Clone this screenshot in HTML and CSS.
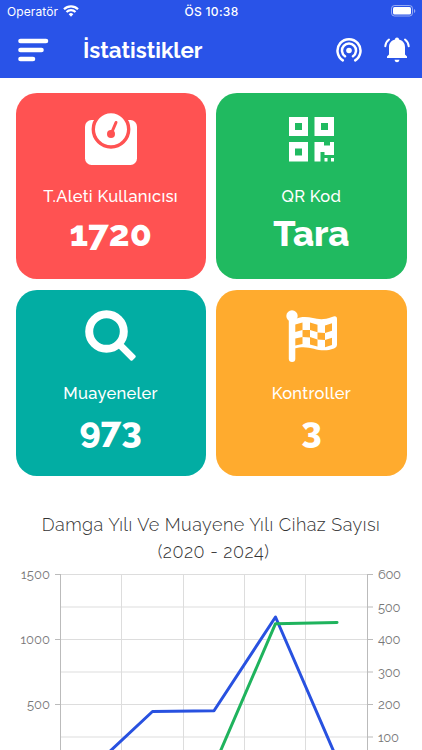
FILE: index.html
```html
<!DOCTYPE html>
<html lang="tr">
<head>
    <meta charset="UTF-8">
    <meta name="viewport" content="width=device-width, initial-scale=1">
    <title>İstatistikler</title>
    <link rel="stylesheet" href="styles.css">
</head>
<body>
<header class="header">
    <div class="status">
        <div class="carrier">
            <span>Operatör</span>
            <svg width="16" height="12" viewBox="0 0 16 12" fill="none" stroke="#fff" stroke-width="2.200">
                <path d="M1 4.300a10 10 0 0 1 14 0M3.500 7a6.400 6.400 0 0 1 9 0"/>
                <path d="M8 11.700L5.700 9.200a3.300 3.300 0 0 1 4.600 0z" fill="#fff" stroke="none"/>
            </svg>
        </div>
        <div class="clock">ÖS 10:38</div>
        <svg class="battery" width="25" height="12" viewBox="0 0 25 12">
            <rect x=".5" y=".5" width="21" height="10.500" rx="3" fill="none" stroke="#fff" stroke-opacity=".5"/>
            <rect x="2" y="2" width="18" height="7.500" rx="1.500" fill="#fff"/>
            <path d="M23 4v4q1.300-.6 1.300-2T23 4z" fill="#fff" fill-opacity=".5"/>
        </svg>
    </div>
    <div class="toolbar">
        <svg class="menu" width="32" height="24" viewBox="0 0 32 24" stroke="#fff" stroke-width="4.600" stroke-linecap="round">
            <path d="M3.500 3h25.500M3.500 12h21M3.500 21h12.500"/>
        </svg>
        <h1>İstatistikler</h1>
        <svg class="signal" width="26" height="26" viewBox="0 0 26 26" fill="none" stroke="#fff" stroke-width="2.500" stroke-linecap="round">
            <path d="M6.800 23.400a11.500 11.500 0 1 1 12.400 0M9 19.300a7 7 0 1 1 8 0"/>
            <circle cx="13" cy="13.500" r="2.800" fill="#fff" stroke="none"/>
        </svg>
        <svg class="bell" width="26" height="26" viewBox="0 0 26 26" fill="#fff">
            <path d="M13 .5c1.200 0 2 .8 2 2 3.700 1 6 3.700 6 7.500v7.500l2 2V21H3v-1.500l2-2V10c0-3.800 2.300-6.500 6-7.500 0-1.200.8-2 2-2zM10.500 22.800h5c-.4 1.700-1.200 2.500-2.500 2.500s-2.100-.8-2.500-2.500z"/>
            <path d="M5 2.500C2.800 4.200 1.500 6.500 1.300 9.200M21 2.500c2.200 1.700 3.500 4 3.700 6.700" fill="none" stroke="#fff" stroke-width="2" stroke-linecap="round"/>
        </svg>
    </div>
</header>

<main>
    <div class="cards">
        <div class="card red">
            <svg class="icon" viewBox="0 0 52 52">
                <rect y="7" width="52" height="45" rx="6.500" fill="#fff"/>
                <circle cx="26" cy="16.300" r="17.700" fill="#fff" stroke="#ff5252" stroke-width="3.400"/>
                <circle cx="26" cy="21" r="4" fill="#ff5252"/>
                <path d="M26.500 20l4.500-10.500" stroke="#ff5252" stroke-width="3" stroke-linecap="round"/>
            </svg>
            <p class="label">T.Aleti Kullanıcısı</p>
            <p class="value">1720</p>
        </div>
        <div class="card green">
            <svg class="icon" viewBox="-.5 0 52 52" fill="#fff" fill-rule="evenodd">
                <path d="M3.500 4h19v19h-19zm6 6v7h7v-7zM29 4h19.500v19H29zm6.500 6v7h7v-7zM3.500 29h19v19.500h-19zm6 6.500v7h7v-7z"/>
                <path d="M29 29h9.500v3.500h6V29h4v13H39v-3h-4v9.500h-6zM39 45h3v3.500h-3zM45.500 45h3v3.500h-3z"/>
            </svg>
            <p class="label">QR Kod</p>
            <p class="value">Tara</p>
        </div>
        <div class="card teal">
            <svg class="icon" viewBox="0 0 52 52" fill="none" stroke="#fff">
                <circle cx="21.500" cy="21.500" r="17.300" stroke-width="8"/>
                <path d="M34 34l3 3" stroke-width="4"/>
                <path d="M38 35l11.500 11.500-3 3L35 38z" fill="#fff" stroke-width="2.500" stroke-linejoin="round"/>
            </svg>
            <p class="label">Muayeneler</p>
            <p class="value">973</p>
        </div>
        <div class="card orange">
            <svg class="icon" viewBox="-.5 0 52 52" fill="#fff">
                <circle cx="6.500" cy="6" r="5.700"/>
                <path d="M3.300 6h6.500v43q0 3-3.200 3t-3.300-3z"/>
                <path d="M9 9.500c15-7 21 4 37.500-2.500q5-2 5 2v26q0 2-3 3.500c-16 6-23-5-39.500 0z"/>
                <g fill="#ffab2e">
                    <path d="M9.800 14.500l7.200-2v7.500l-7.200 2zM24.500 12.500l7.500 2.200v7.500l-7.500-2.200zM39.500 15.500l7-2.200v7.400l-7 2.300z"/>
                    <path d="M17 20l7.500 0v7.500l-7.500-.5zM32 22.500l7.500.5v7l-7.500-.5z"/>
                    <path d="M9.800 28.500l7.200-1.500v7l-7.200 1.500zM24.500 27l7.500 2.500v7l-7.500-2zM39.500 30l7-2.200v7.200l-7 2.300z"/>
                </g>
            </svg>
            <p class="label">Kontroller</p>
            <p class="value">3</p>
        </div>
    </div>

    <section class="chart">
        <h2>Damga Yılı Ve Muayene Yılı Cihaz Sayısı<br><span class="years">(2020 - 2024)</span></h2>
        <svg width="422" height="186" viewBox="0 564 422 186">
            <path class="grid" d="M60 574.500h308M60 607h308M60 639.500h308M60 672h308M60 704.500h308M60 737h308M121.500 574v176M183.500 574v176M244.500 574v176M305.500 574v176"/>
            <path class="axis" d="M60.500 574v176M367.500 574v176M55 574.500h5M55 639.500h5M55 704.500h5M368 574.500h5M368 607h5M368 639.500h5M368 672h5M368 704.500h5M368 737h5"/>
            <g class="ticks">
                <text x="21" y="579" textLength="29">1500</text>
                <text x="20.500" y="644" textLength="29.500">1000</text>
                <text x="27" y="709" textLength="23">500</text>
                <text x="378" y="579" textLength="23">600</text>
                <text x="378" y="612" textLength="22.500">500</text>
                <text x="378" y="644" textLength="22.500">400</text>
                <text x="378" y="677" textLength="22.500">300</text>
                <text x="378" y="709" textLength="22.500">200</text>
                <text x="378" y="742" textLength="21">100</text>
            </g>
            <path class="line" stroke="#2851e0" d="M91 769L152.500 711.500L214 710.800L275.500 617L337 759"/>
            <path class="line" stroke="#1fb35d" d="M214 766L275.500 623.700L337 622.400"/>
        </svg>
    </section>
</main>
</body>
</html>
```
FILE: styles.css
```css
* {
    box-sizing: border-box;
    margin: 0;
    padding: 0;
}

body {
    height: 750px;
    overflow: hidden;
    background: #fff;
    font-family: Raleway, Lato, sans-serif;
}

svg {
    display: block;
    flex: none;
}

/* header */
.header {
    height: 77.500px;
    background: #2953e8;
    color: #fff;
}

.status {
    display: grid;
    grid-template-columns: 1fr auto 1fr;
    align-items: center;
    height: 22px;
    padding: 0 6px 0 7px;
    font: 12px Inter, sans-serif;
}

.carrier {
    display: flex;
    gap: 5px;
    align-items: center;
    letter-spacing: .1px;
}

.clock {
    font-weight: 500;
    letter-spacing: .3px;
}

.battery {
    justify-self: end;
}

.toolbar {
    display: flex;
    align-items: center;
    height: 55px;
    padding: 0 12px 0 17px;
}

.toolbar h1 {
    flex: 1;
    margin-left: 34px;
    font-size: 22.300px;
    font-weight: 700;
    line-height: 30px;
}

.signal {
    margin-right: 22.500px;
}

/* cards */
.cards {
    display: grid;
    grid-template-columns: 1fr 1fr;
    gap: 10.500px;
    padding: 15.500px 15.500px 0;
}

.card {
    display: flex;
    flex-direction: column;
    align-items: center;
    height: 186px;
    padding-top: 20px;
    border-radius: 21px;
    color: #fff;
}

.red {
    background: #ff5252;
}

.green {
    background: #20ba60;
}

.teal {
    background: #02ada3;
}

.orange {
    background: #ffab2e;
}

.icon {
    width: 52px;
    height: 52px;
}

.label {
    margin-top: 19px;
    font-size: 16.500px;
    font-weight: 500;
    letter-spacing: .3px;
    line-height: 24px;
    white-space: nowrap;
}

.value {
    margin-top: 6px;
    font-size: 36px;
    font-weight: 800;
    line-height: 38px;
}

/* chart */
.chart {
    margin-top: 35px;
}

.chart h2 {
    height: 53.500px;
    color: #333;
    font-size: 18px;
    font-weight: 300;
    letter-spacing: .48px;
    line-height: 27px;
    text-align: center;
    white-space: nowrap;
}

.years {
    padding-left: 5px;
}

.grid {
    fill: none;
    stroke: #ddd;
}

.axis {
    fill: none;
    stroke: #bbb;
}

.ticks {
    fill: #777;
    font-size: 13px;
}

.line {
    fill: none;
    stroke-width: 3;
    stroke-linecap: round;
    stroke-linejoin: round;
}
```
